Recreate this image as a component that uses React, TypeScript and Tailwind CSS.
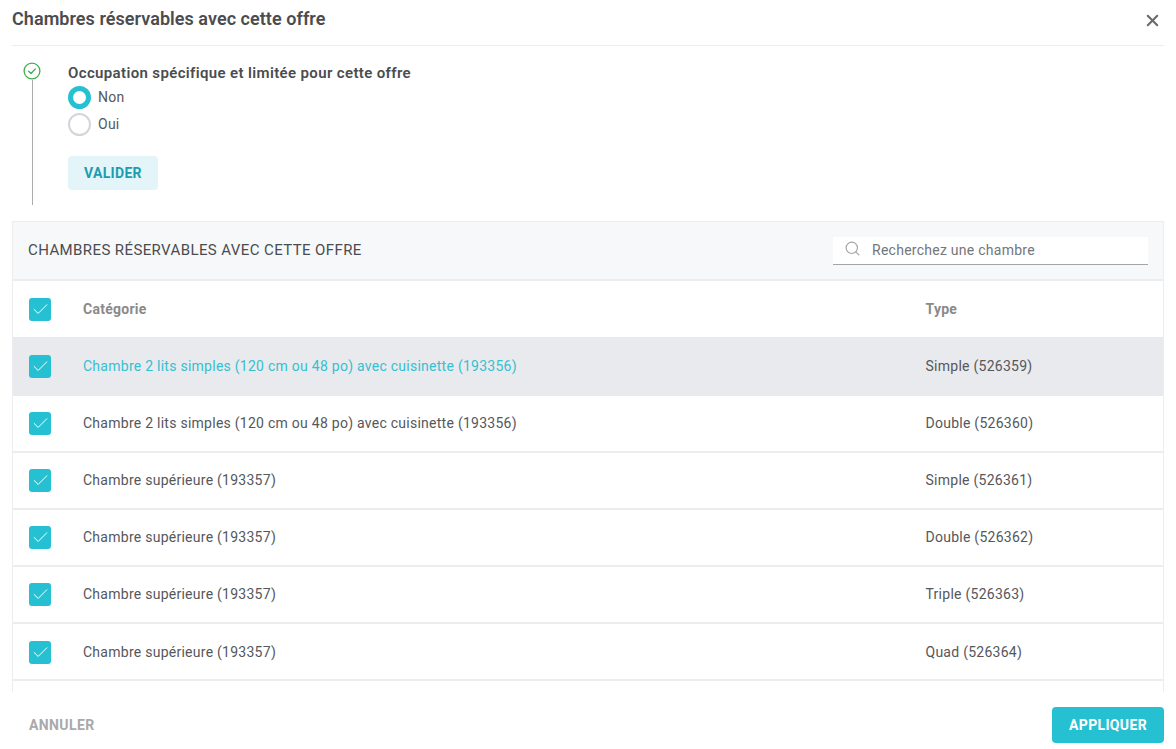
import React from 'react';
import { Check, Search, X } from 'lucide-react';

const rows = [
  { name: 'Chambre 2 lits simples (120 cm ou 48 po) avec cuisinette (193356)', type: 'Simple (526359)', h: 'h-[59px] pt-[1px]', active: true },
  { name: 'Chambre 2 lits simples (120 cm ou 48 po) avec cuisinette (193356)', type: 'Double (526360)', h: 'h-[57px]' },
  { name: 'Chambre supérieure (193357)', type: 'Simple (526361)', h: 'h-[57px]' },
  { name: 'Chambre supérieure (193357)', type: 'Double (526362)', h: 'h-[57px]' },
  { name: 'Chambre supérieure (193357)', type: 'Triple (526363)', h: 'h-[57px]' },
  { name: 'Chambre supérieure (193357)', type: 'Quad (526364)', h: 'h-[57px] pt-[1px]' },
];

const CheckBox = () => (
  <div className="w-[22px] h-[23px] rounded-[3px] bg-[#26c0d3] flex items-center justify-center shrink-0">
    <Check size={19} strokeWidth={1.25} className="text-white" />
  </div>
);

const App: React.FC = () => {
  return (
    <div className="w-[1176px] h-[749px] bg-white overflow-hidden flex flex-col text-[14px] tracking-[0.26px] text-[#55575b] font-['Roboto',sans-serif]">
      <div className="mx-3 h-[46px] shrink-0 border-b border-[#ebedef] flex items-start justify-between">
        <h1 className="text-[18px] leading-[20px] tracking-[0.05px] mt-[9px] font-semibold text-[#4b4c4f]">Chambres réservables avec cette offre</h1>
        <X size={19} strokeWidth={2.6} className="text-[#6b6b6b] mt-[11px] mr-[2px]" />
      </div>

      <div className="h-[175px] shrink-0 flex pl-[23px]">
        <div className="w-[18px] flex flex-col items-center pt-[16px] pb-[16px] shrink-0">
          <svg width="18" height="18" viewBox="0 0 18 18" fill="none" className="shrink-0">
            <circle cx="9" cy="9" r="7.9" stroke="#3fae4c" strokeWidth="1.3" />
            <path d="M5.6 9.2l2.4 2.3 4.4-4.6" stroke="#3fae4c" strokeWidth="1.3" strokeLinecap="round" strokeLinejoin="round" />
          </svg>
          <div className="w-px flex-1 bg-[#a9abad]" />
        </div>
        <div className="ml-[27px] pt-[18px]">
          <div className="text-[15px] leading-[18px] tracking-[0.36px] font-semibold text-[#4b4c4f]">Occupation spécifique et limitée pour cette offre</div>
          <div className="flex items-center gap-[7px] mt-[4px] h-[23px]">
            <div className="w-[23px] h-[23px] rounded-full border-[5px] border-[#26c0d3] bg-white" />
            <span>Non</span>
          </div>
          <div className="flex items-center gap-[7px] mt-[4px] h-[23px]">
            <div className="w-[23px] h-[23px] rounded-full border-2 border-[#d3d5da] bg-white" />
            <span>Oui</span>
          </div>
          <button className="mt-[20px] w-[90px] h-[34px] rounded-[4px] bg-[#e4f5f9] text-[#1b9db1] text-[14px] tracking-[0.3px] font-bold flex items-center justify-center">VALIDER</button>
        </div>
      </div>

      <div className="mx-3 h-[471px] shrink-0 border-x border-t border-[#ebedef] overflow-hidden">
        <div className="h-[59px] bg-[#f7f8fa] border-b-2 border-[#ebedef] flex items-center justify-between pl-[15px] pr-[15px]">
          <span className="text-[15px] tracking-[0.4px] text-[#4b4c4f]">CHAMBRES RÉSERVABLES AVEC CETTE OFFRE</span>
          <div className="w-[315px] h-[28px] bg-white border-b border-[#a5a5a5] flex items-center pl-[11px]">
            <Search size={17} strokeWidth={1.6} className="text-[#a3a3a3] -mt-[4px]" />
            <span className="ml-[11px] text-[#73767b]">Recherchez une chambre</span>
          </div>
        </div>
        <div className="h-[56px] flex items-center pl-4">
          <CheckBox />
          <span className="ml-[32px] w-[842.5px] font-bold text-[#8a8a8a]">Catégorie</span>
          <span className="font-bold text-[#8a8a8a]">Type</span>
        </div>
        {rows.map((row, i) => (
          <div key={i} className={`${row.h} flex items-center pl-4 border-b-2 ${row.active ? 'bg-[#e9eaed] border-[#e9eaed]' : 'border-[#ebedef]'}`}>
            <CheckBox />
            <span className={`ml-[32px] w-[842.5px] ${row.active ? 'text-[#35bfd1]' : ''}`}>{row.name}</span>
            <span>{row.type}</span>
          </div>
        ))}
      </div>

      <div className="flex-1 flex items-center justify-between pl-[29px] pr-3 pt-[9px]">
        <button className="text-[14px] tracking-[0.4px] font-bold text-[#a9a9a9]">ANNULER</button>
        <button className="w-[112px] h-[36px] rounded-[4px] bg-[#26c0d3] text-white text-[14px] tracking-[0.35px] font-bold">APPLIQUER</button>
      </div>
    </div>
  );
};

export default App;
